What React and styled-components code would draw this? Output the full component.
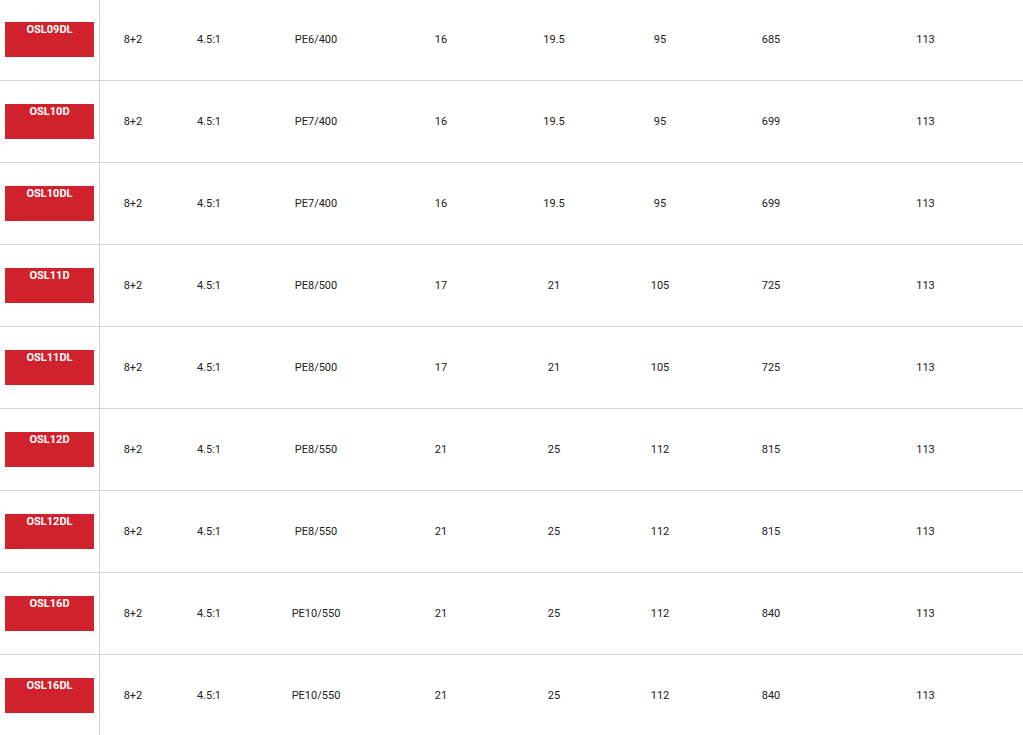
import React from 'react';
import styled, { createGlobalStyle } from 'styled-components';

const GlobalStyle = createGlobalStyle`
  html, body {
    margin: 0;
    padding: 0;
    background: #fff;
  }
  body {
    font-family: Roboto, 'Liberation Sans', Arial, sans-serif;
    overflow: hidden;
  }
`;

const Table = styled.div`
  width: 1023px;
  margin-top: -1px;
`;

const Row = styled.div`
  display: grid;
  grid-template-columns: 100px 66px 86px 128px 122px 104px 108px 114px 195px;
  height: 82px;
  box-sizing: border-box;
  border-bottom: 1px solid #d6d6d6;
`;

const Cell = styled.div`
  display: flex;
  align-items: center;
  justify-content: center;
  font-size: 11px;
  color: #212121;
`;

const CodeCell = styled(Cell)`
  box-sizing: border-box;
  border-right: 1px solid #d2d2d2;
  margin-bottom: -1px;
`;

const Badge = styled.div`
  width: 89px;
  height: 35px;
  background: #d0222d;
  color: #fff;
  font-weight: 700;
  font-size: 11px;
  line-height: 16px;
  text-align: center;
  align-self: center;
  margin-bottom: 1px;
`;

const rows = [
  ['OSL09DL', '8+2', '4.5:1', 'PE6/400', '16', '19.5', '95', '685', '113'],
  ['OSL10D', '8+2', '4.5:1', 'PE7/400', '16', '19.5', '95', '699', '113'],
  ['OSL10DL', '8+2', '4.5:1', 'PE7/400', '16', '19.5', '95', '699', '113'],
  ['OSL11D', '8+2', '4.5:1', 'PE8/500', '17', '21', '105', '725', '113'],
  ['OSL11DL', '8+2', '4.5:1', 'PE8/500', '17', '21', '105', '725', '113'],
  ['OSL12D', '8+2', '4.5:1', 'PE8/550', '21', '25', '112', '815', '113'],
  ['OSL12DL', '8+2', '4.5:1', 'PE8/550', '21', '25', '112', '815', '113'],
  ['OSL16D', '8+2', '4.5:1', 'PE10/550', '21', '25', '112', '840', '113'],
  ['OSL16DL', '8+2', '4.5:1', 'PE10/550', '21', '25', '112', '840', '113'],
];

export default function App() {
  return (
    <>
      <GlobalStyle />
      <Table>
        {rows.map(([code, ...values]) => (
          <Row key={code}>
            <CodeCell>
              <Badge>{code}</Badge>
            </CodeCell>
            {values.map((v, i) => (
              <Cell key={i}>{v}</Cell>
            ))}
          </Row>
        ))}
      </Table>
    </>
  );
}
